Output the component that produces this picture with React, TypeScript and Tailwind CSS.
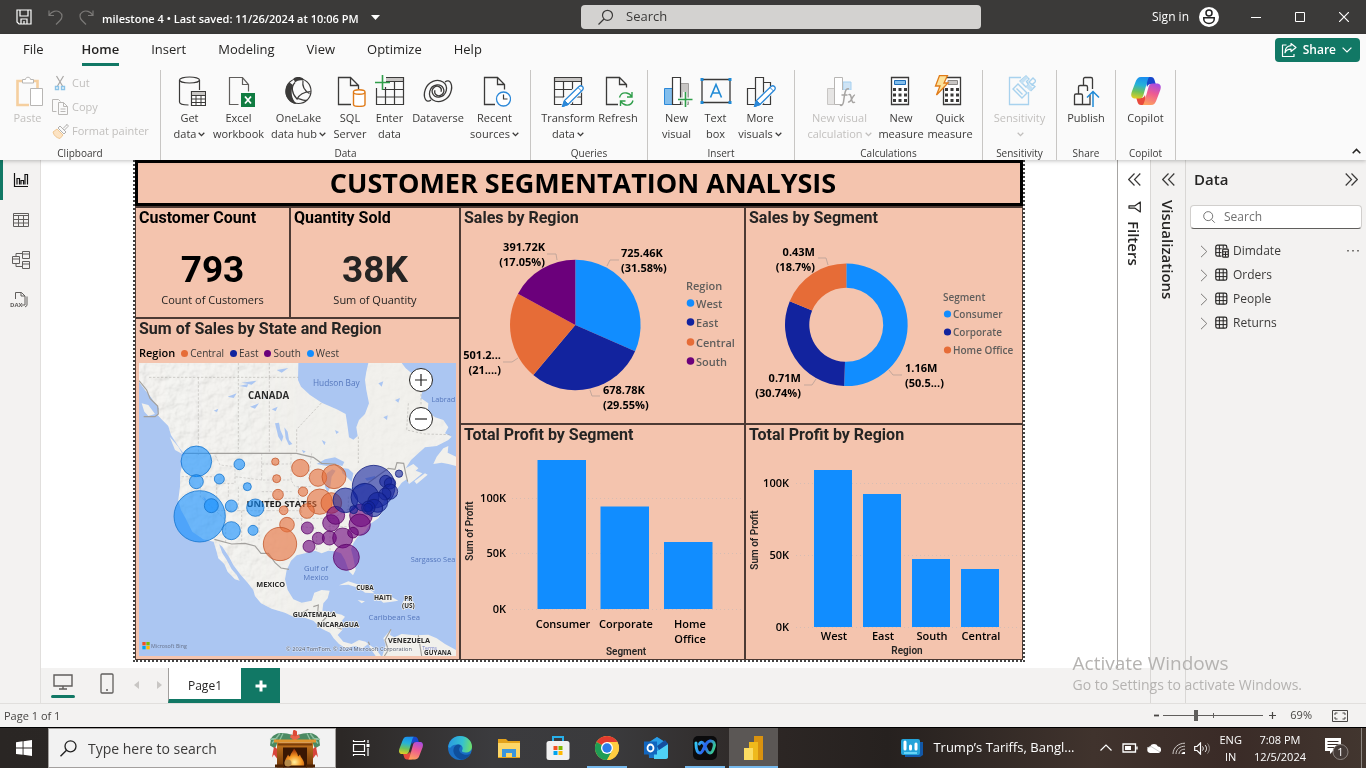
import React from "react";

type P = { children?: React.ReactNode };

/* ---------- shared bits ---------- */

function Icon({ children, size = 32 }: P & { size?: number }) {
  return (
    <svg width={size} height={size} viewBox={`0 0 ${size} ${size}`} fill="none" className="shrink-0" aria-hidden="true">
      {children}
    </svg>
  );
}

function Caret({ className = "" }: { className?: string }) {
  return (
    <svg width="7" height="5" viewBox="0 0 7 5" fill="none" className={`inline-block ${className}`} aria-hidden="true">
      <path d="M.7.8 3.5 3.6 6.3.8" stroke="currentColor" strokeWidth="1.3" />
    </svg>
  );
}

function CopilotLogo({ id, size }: { id: string; size: number }) {
  return (
    <svg width={size} height={size} viewBox="0 0 32 32" aria-hidden="true">
      <defs>
        <linearGradient id={`${id}a`} x1="12" y1="2" x2="8" y2="25" gradientUnits="userSpaceOnUse">
          <stop offset="0" stopColor="#1a8ef0" />
          <stop offset=".35" stopColor="#25b2d8" />
          <stop offset=".65" stopColor="#6fc25a" />
          <stop offset="1" stopColor="#f6cf1b" />
        </linearGradient>
        <linearGradient id={`${id}b`} x1="26" y1="8" x2="18" y2="31" gradientUnits="userSpaceOnUse">
          <stop offset="0" stopColor="#a24be8" />
          <stop offset=".45" stopColor="#ee5a92" />
          <stop offset="1" stopColor="#ffa55a" />
        </linearGradient>
        <linearGradient id={`${id}c`} x1="16" y1="3" x2="25" y2="9" gradientUnits="userSpaceOnUse">
          <stop offset="0" stopColor="#1450c8" />
          <stop offset="1" stopColor="#1b3fd0" />
        </linearGradient>
      </defs>
      <path d="M15 2h6c2 0 2.900 1.200 3.500 3l1.200 4H21c-2 0-3.300 1-4 3z" fill={`url(#${id}c)`} />
      <path d="M17 30h-6c-2 0-2.900-1.200-3.500-3l-1.200-4H11c2 0 3.300-1 4-3z" fill="#e84a3c" />
      <path d="M19.500 2H11C8 2 6.500 4 5.500 7L1.700 17c-1.300 4 0 6.500 3.600 6.500H9.500c2 0 3.200-1 3.800-3L17 7.500C17.800 4.500 18.500 2.400 19.500 2z" fill={`url(#${id}a)`} />
      <path d="M12.500 30H21c3 0 4.500-2 5.500-5l3.800-10c1.300-4 0-6.500-3.600-6.500H22.500c-2 0-3.200 1-3.800 3L15 24.500c-.8 3-1.500 5.100-2.500 5.500z" fill={`url(#${id}b)`} />
    </svg>
  );
}

/* ---------- title bar ---------- */

function TitleBar() {
  return (
    <header className="grid h-[34px] shrink-0 grid-cols-[581fr_400px_385fr] items-center bg-[#3b3a39] text-white">
      <div className="flex items-center pl-4">
        <button aria-label="Save" className="mr-4">
          <Icon size={16}>
            <path d="M1 1h14v14H3l-2-2zM4 1v6h8V1M5 15v-5h6v5M8 12v3" stroke="#fff" strokeWidth="1.200" />
          </Icon>
        </button>
        <button aria-label="Undo" className="mr-[14px]">
          <Icon size={16}>
            <path d="M1 1.500v5h5M1.300 6.200C3.500 2.500 8 .8 11.500 3s3 6 .5 8.500L8 15.500" stroke="#7b7977" strokeWidth="1.200" />
          </Icon>
        </button>
        <button aria-label="Redo" className="mr-2">
          <Icon size={16}>
            <path d="M15 1.500v5h-5M14.700 6.200C12.500 2.500 8 .8 4.500 3s-3 6-.5 8.500L8 15.500" stroke="#7b7977" strokeWidth="1.200" />
          </Icon>
        </button>
        <button className="flex items-center gap-3 pt-1 text-[11px] font-semibold whitespace-nowrap">
          <span>milestone 4 • Last saved: 11/26/2024 at 10:06 PM</span>
          <svg width="9" height="5" viewBox="0 0 9 5" className="mb-1" aria-hidden="true">
            <path d="M0 0h9L4.500 5z" fill="#fff" />
          </svg>
        </button>
      </div>
      <label className="flex h-6 items-center gap-3 rounded-sm bg-[#d3d2d0] pl-4 text-[#3b3a39]">
        <svg width="17" height="17" viewBox="0 0 17 17" fill="none" aria-hidden="true">
          <circle cx="10.500" cy="6.300" r="5" stroke="#3b3a39" strokeWidth="1.200" />
          <path d="m7 10-5.500 5.500" stroke="#3b3a39" strokeWidth="1.300" />
        </svg>
        <input aria-label="Search commands" placeholder="Search" className="min-w-0 flex-1 bg-transparent text-[13px] outline-none placeholder:text-[#3b3a39]" />
      </label>
      <div className="flex items-center justify-end">
        <button className="mr-[15px] flex items-center gap-2.5 text-[12px]">
          Sign in
          <svg width="20" height="20" viewBox="0 0 20 20" aria-hidden="true">
            <circle cx="10" cy="10" r="10" fill="#fff" />
            <circle cx="10" cy="6" r="3" fill="none" stroke="#222" strokeWidth="1.500" />
            <path d="M4.800 10.800h10.400v1.400c0 2.500-2.300 4.200-5.200 4.200s-5.200-1.700-5.200-4.200z" fill="none" stroke="#222" strokeWidth="1.500" />
          </svg>
        </button>
        <button aria-label="Minimize" className="flex w-11 justify-center">
          <Icon size={10}><path d="M0 5.500h10" stroke="#fff" /></Icon>
        </button>
        <button aria-label="Maximize" className="flex w-11 justify-center">
          <Icon size={10}><path d="M.5.5h9v9h-9z" stroke="#fff" /></Icon>
        </button>
        <button aria-label="Close" className="flex w-11 justify-center">
          <Icon size={10}><path d="m0 0 10 10M10 0 0 10" stroke="#fff" strokeWidth="1.200" /></Icon>
        </button>
      </div>
    </header>
  );
}

/* ---------- ribbon ---------- */

const tabs = ["File", "Home", "Insert", "Modeling", "View", "Optimize", "Help"];

function TabRow() {
  return (
    <nav className="flex h-8 items-center justify-between pr-1.5 pl-[7px] text-[13px] text-[#252423]">
      <div className="flex">
        {tabs.map((t) => (
          <button key={t} className={`px-4 ${t === "File" ? "mr-1.5" : ""} ${t === "Home" ? "font-semibold" : ""}`}>
            <span className={`block border-b-[3px] pt-1 pb-1 leading-5 ${t === "Home" ? "border-[#117865]" : "border-transparent"}`}>{t}</span>
          </button>
        ))}
      </div>
      <button className="flex h-6 items-center gap-1.5 rounded bg-[#117865] pr-2 pl-1.5 text-[12px] font-semibold text-white">
        <Icon size={16}>
          <path d="M5.500 3H1.500v11.500h11.500V12M10 1.500l5 4-5 4V7.200c-3 0-5 1-6 3.500 0-4 2-6.700 6-7z" stroke="#fff" strokeWidth="1.200" strokeLinejoin="round" />
        </Icon>
        Share
        <svg width="10" height="6" viewBox="0 0 10 6" fill="none" aria-hidden="true"><path d="m.6.600 4.400 4.400L9.400.600" stroke="#fff" strokeWidth="1.200" /></svg>
      </button>
    </nav>
  );
}

const K = "#3b3a39";

const icGetData = (
  <Icon>
    <path d="M5.500 5v22c0 1.800 4 3 9 3M25.500 5v10" stroke={K} strokeWidth="1.200" />
    <ellipse cx="15.500" cy="5" rx="10" ry="3" stroke={K} strokeWidth="1.200" />
    <path d="M17.500 16.500h14v14h-14z" fill="#fff" stroke={K} strokeWidth="1.200" />
    <path d="M18 17h13v3H18z" fill="#c8c6c4" />
    <path d="M17.500 20.500h14M17.500 24h14M17.500 27.500h14M22 20.500v10M27 20.500v10" stroke={K} />
  </Icon>
);
const icExcel = (
  <Icon>
    <path d="M15.500 29.500h-9v-27h13l6 7v7M19.500 2.500v7h6" stroke="#605e5c" strokeWidth="1.200" />
    <path d="M18 18h14v14H18z" fill="#107c41" />
    <path d="m22 21.500 6 7M28 21.500l-6 7" stroke="#fff" strokeWidth="1.800" />
  </Icon>
);
const icOneLake = (
  <Icon>
    <circle cx="15.500" cy="16" r="12.500" stroke={K} strokeWidth="1.200" />
    <path d="M10.500 3.500C13.500 1.500 18 1.500 20.500 4l-.5 1.500c-3-.8-5.500 0-8 2zM6.500 7.500C1 13 1 21 7 26.500 10 29 13.500 29 13.500 28.500 8.500 24 7.500 17 10 10z" fill={K} />
    <path d="M12 7.500c-4 4-3.500 11 2 16.500 2.500-5 7-7 13.500-7.500M20 5.500c-1 6 1 10 6.500 13M14 24c2-2 6 3 10 1" stroke={K} strokeWidth="1.200" />
  </Icon>
);
const icSql = (
  <Icon>
    <path d="M17 29.500H4.500v-27h12l8 8M16.500 2.500v8h8v4" stroke={K} strokeWidth="1.300" />
    <path d="M19.500 17.500v12c0 2.500 11.500 2.500 11.500 0v-12" fill="#fff" stroke="#e07b18" strokeWidth="1.400" />
    <ellipse cx="25.200" cy="17" rx="5.800" ry="2.200" fill="#fff" stroke="#e07b18" strokeWidth="1.400" />
  </Icon>
);
const icEnter = (
  <Icon>
    <path d="M12 2h17v4H12z" fill="#c8c6c4" />
    <path d="M12 2.500h17.500v27h-27V13M12 6.500h17.500M8 14.500h21.500M2.500 22h27M11.500 12v17.500M20.500 6.500v23" stroke={K} strokeWidth="1.200" />
    <path d="M8.500 0v15M1 7.500h15" stroke="#2f9e4a" strokeWidth="1.600" />
  </Icon>
);
const icDataverse = (
  <Icon>
    <path d="M9 25C4 29 .5 22 3.500 14 6 7 15 3 21 7c6 4 4 14-4 15-6 .6-9-6-5-9.500 3.500-3 8.500 0 7 4.200" stroke={K} strokeWidth="1.300" />
    <path d="M23 7c5-4 8.500 3 5.500 11C26 25 17 29 11 25c-6-4-4-14 4-15 6-.6 9 6 5 9.500-3.500 3-8.500 0-7-4.200" stroke={K} strokeWidth="1.300" />
  </Icon>
);
const icRecent = (
  <Icon>
    <path d="M16 29.500H5.500v-27h13l7 7v5M18.500 2.500v7h7" stroke={K} strokeWidth="1.300" />
    <circle cx="24.500" cy="24" r="7" fill="#fff" stroke="#2b88d8" strokeWidth="1.300" />
    <path d="M24.500 19.500V24h4" stroke={K} strokeWidth="1.200" />
  </Icon>
);
const pencil = (
  <g>
    <path d="m10.500 31.500 2-6L27 11.500c2.500-2 5.500 1 3.500 3.500L16 29.500z" fill="#fff" stroke="#2b88d8" strokeWidth="1.300" />
    <path d="m10.500 31.500 2-6 4 4zM26 12.500l3.500 3.500" fill="#2b88d8" stroke="#2b88d8" />
  </g>
);
const icTransform = (
  <Icon>
    <path d="M2 2h27v4H2z" fill="#c8c6c4" />
    <path d="M2.500 2.500h27v27h-27zM2.500 6.500h27M2.500 14.500h27M2.500 22h27M11.500 6.500v23M20.500 6.500v23" stroke={K} strokeWidth="1.200" />
    <path d="m12 24 14-13 4 4-14 15h-5z" fill="#fafafa" stroke="#fafafa" strokeWidth="3" />
    {pencil}
  </Icon>
);
const icRefresh = (
  <Icon>
    <path d="M16 29.500H4.500v-27h13l7 7v3M17.500 2.500v7h7" stroke={K} strokeWidth="1.300" />
    <path d="M17.500 22.500c1-3.500 4-5 7-4.500 2 .3 4 1.500 5 3.500M31 25.500c-1 3.500-4 5-7 4.500-2-.3-4-1.500-5-3.500M30 17v5h-5M18.500 31v-5h5" stroke="#2f9e4a" strokeWidth="1.400" />
  </Icon>
);
const icNewVisual = (
  <Icon>
    <path d="M3.500 13.500h8v16h-8z" fill="#83beec" stroke="#2b88d8" />
    <path d="M19.500 8.500h8v21h-8z" fill="#c8c6c4" stroke="#a19f9d" />
    <path d="M11.500 2.500h8v27h-8z" fill="#fff" stroke={K} strokeWidth="1.200" />
    <path d="M17 24.500h14M24 17v15" stroke="#fafafa" strokeWidth="4" />
    <path d="M17 24.500h14.500M24.500 17v15" stroke="#2f9e4a" strokeWidth="1.600" />
  </Icon>
);
const icTextBox = (
  <Icon>
    <path d="M2 4.500h28v23H2z" stroke={K} strokeWidth="1.300" />
    <path d="M.5 3h3v3h-3zM28.500 3h3v3h-3zM.5 26h3v3h-3zM28.500 26h3v3h-3z" fill="#1f8ad6" />
    <path d="m10.500 22.500 5.500-13 5.500 13M12.500 18h7" stroke="#1f8ad6" strokeWidth="1.600" />
  </Icon>
);
const icMoreVisuals = (
  <Icon>
    <path d="M3.500 13.500h8v16h-8zM11.500 2.500h8v27h-8zM19.500 7.500h7v22h-7z" stroke={K} strokeWidth="1.200" />
    <path d="m14 24 13-11 3 2-14 15h-4z" fill="#fafafa" stroke="#fafafa" strokeWidth="3" />
    {pencil}
  </Icon>
);
const icVisualCalc = (
  <Icon>
    <path d="M3.500 13.500h7v16h-7z" fill="#e6e5e4" stroke="#c8c6c4" />
    <path d="M19 7h8v8h-8z" fill="#cfe4f5" stroke="#a5d0f0" />
    <path d="M10.500 2.500h8v27h-8z" fill="#fff" stroke="#b8b6b4" />
    <path d="M17 15h15v17H18z" fill="#fafafa" />
    <path d="M25 14c-3-1-3.800 2-4.500 6l-1 7c-.5 3-2 4-3.500 3M17.500 20h6M24.500 20c2-1.500 2.500 1 3 4s1.500 4.500 3.500 3M31 20c-2.500-.5-3.500 8-7 7" stroke="#a6a4a2" strokeWidth="1.500" />
  </Icon>
);
const calcGrid = "M9 13h3v3H9zM14.500 13h3v3h-3zM20 13h3v3h-3zM9 18.500h3v3H9zM14.500 18.500h3v3h-3zM20 18.500h3v3h-3zM9 24h3v3H9zM14.500 24h3v3h-3zM20 24h3v3h-3z";
const icMeasure = (
  <Icon>
    <path d="M6.500 2.500h17v27h-17z" fill="#fff" stroke={K} strokeWidth="1.300" />
    <path d="M9.500 5.500h11v4h-11z" fill="#83beec" stroke="#1f6fb8" />
    <path d={calcGrid} fill={K} transform="translate(-1)" />
  </Icon>
);
const icQuick = (
  <Icon>
    <path d="M9.500 2.500h17v27h-17z" fill="#fff" stroke={K} strokeWidth="1.300" />
    <path d="M14 5.500h9.500v4H14z" fill="#c8c6c4" stroke="#8a8886" />
    <path d={calcGrid} fill={K} transform="translate(2)" />
    <path d="M5.500.5h8L10 8h4L2.500 20 6 11H1.500z" fill="#fce29b" stroke="#e07b18" strokeWidth="1.300" />
  </Icon>
);
const icSensitivity = (
  <Icon>
    <path d="M17 2.500H5.500v27h19V17" stroke="#a8d2ee" strokeWidth="1.300" />
    <path d="m9 14 5-5 9 9-5 5zM12.500 13.500l6 6M16 6l6 6 2.500-2.500-2-3L25 4l-3-3zM23 12l4 3.500 4-4-4-3M25 7l4-4 3 3-4 4z" stroke="#a8d2ee" strokeWidth="1.400" />
    <path d="m16 6 6-5 2 2-6 6zM22 12l3-3 4 4-3 3z" fill="#c5e1f4" />
  </Icon>
);
const icPublish = (
  <Icon>
    <path d="M15 29.500H4.500v-9c0-1 .7-1.500 1.500-1.500h5c1 0 1.500.600 1.500 1.500v9M8.500 19v-7c0-1 .6-1.500 1.500-1.500h6c1 0 1.500.600 1.500 1.500v4M13.500 10.500V4c0-1 .6-1.500 1.500-1.500h6c1 0 1.500.600 1.500 1.500v10M12.500 29.500H20V20" stroke={K} strokeWidth="1.300" />
    <path d="M23 32V17M17 22.500l6-6 6 6" stroke="#1f8ad6" strokeWidth="1.500" />
  </Icon>
);

type RB = { icon: React.ReactNode; a: string; b?: string; caret?: boolean; w: string; off?: boolean };

function RibbonButton({ icon, a, b, caret, w, off }: RB) {
  return (
    <button className={`flex flex-col items-center gap-[3px] text-[11px] leading-4 whitespace-nowrap ${w} ${off ? "text-[#c1bfbd]" : "text-[#3b3a39]"}`}>
      {icon}
      <span className="flex flex-col items-center">
        <span>{a}</span>
        <span>
          {b}
          {caret && <Caret className="mb-px ml-0.5" />}
        </span>
      </span>
    </button>
  );
}

function Group({ label, w, children }: P & { label: string; w: string }) {
  return (
    <section className={`flex shrink-0 flex-col border-r border-[#c8c6c4] pt-[5px] ${w}`}>
      <div className="flex h-[71px] justify-center">{children}</div>
      <h2 className="text-center text-[10px] leading-[14px] text-[#3b3a39]">{label}</h2>
    </section>
  );
}

function SmallCmd({ icon, label }: { icon: React.ReactNode; label: string }) {
  return (
    <button className="flex h-6 items-center gap-[3px] text-[11px] whitespace-nowrap text-[#c1bfbd]">
      {icon}
      {label}
    </button>
  );
}

function Ribbon() {
  return (
    <div className="z-10 shrink-0 bg-[#fafafa] shadow-[0_1px_4px_rgba(0,0,0,0.25)]">
      <TabRow />
      <div className="flex items-end justify-between pt-1">
        <div className="flex">
          <Group label="Clipboard" w="w-[161px]">
            <div className="flex w-full">
              <button className="flex w-[55px] flex-col items-center gap-[3px] text-[11px] leading-4 text-[#c1bfbd]">
                <Icon>
                  <path d="M10 6H5.500v24H17M21 6h4.500v7" stroke="#f5cf9f" strokeWidth="2.600" />
                  <path d="M10.500 8V4.500h3c0-3 5-3 5 0h3V8z" fill="#fff" stroke="#b8b6b4" />
                  <path d="M18.500 13.500h12v17h-12z" fill="#fff" stroke="#b8b6b4" />
                </Icon>
                Paste
              </button>
              <div className="-mt-1 -ml-1 flex flex-col">
                <SmallCmd
                  label="Cut"
                  icon={
                    <Icon size={18}>
                      <path d="m5.500 2 6 10M12.500 2l-6 10" stroke="#a9a7a5" strokeWidth="1.200" />
                      <path d="M4.500 12.500h3v3h-3zM10.500 12.500h3v3h-3z" stroke="#8cc4e8" strokeWidth="1.400" />
                    </Icon>
                  }
                />
                <SmallCmd
                  label="Copy"
                  icon={
                    <Icon size={18}>
                      <path d="M5.500 13.500h-4v-12h6l2 2M7.500 4.500h5l4 4v8h-9zM12.500 4.500v4h4M9.500 11h5M9.500 13.500h5" stroke="#bab8b6" />
                    </Icon>
                  }
                />
                <SmallCmd
                  label="Format painter"
                  icon={
                    <Icon size={18}>
                      <path d="m2 10 4-3 6 6-3 3.500C6 16 3 14 2 10z" fill="#fce3c3" stroke="#f0c793" />
                      <path d="m7 6 2-2 6 6-2 2zM12 6.500 15.500 3M13.500 8 17 4.500c.5-1.500-1-2.500-2-1.500" stroke="#b1afad" />
                    </Icon>
                  }
                />
              </div>
            </div>
          </Group>
          <Group label="Data" w="w-[370px]">
            <RibbonButton icon={icGetData} a="Get" b="data" caret w="w-11" />
            <RibbonButton icon={icExcel} a="Excel" b="workbook" w="w-[54px]" />
            <RibbonButton icon={icOneLake} a="OneLake" b="data hub" caret w="w-[66px]" />
            <RibbonButton icon={icSql} a="SQL" b="Server" w="w-[37px]" />
            <RibbonButton icon={icEnter} a="Enter" b="data" w="w-[42px]" />
            <RibbonButton icon={icDataverse} a="Dataverse" w="w-[55px]" />
            <RibbonButton icon={icRecent} a="Recent" b="sources" caret w="w-[58px]" />
          </Group>
          <Group label="Queries" w="w-[117px]">
            <RibbonButton icon={icTransform} a="Transform" b="data" caret w="w-[58px]" />
            <RibbonButton icon={icRefresh} a="Refresh" w="w-[42px]" />
          </Group>
          <Group label="Insert" w="w-[147px]">
            <RibbonButton icon={icNewVisual} a="New" b="visual" w="w-[37px]" />
            <RibbonButton icon={icTextBox} a="Text" b="box" w="w-[41px]" />
            <RibbonButton icon={icMoreVisuals} a="More" b="visuals" caret w="w-12" />
          </Group>
          <Group label="Calculations" w="w-[188px]">
            <RibbonButton icon={icVisualCalc} a="New visual" b="calculation" caret off w="w-[74px]" />
            <RibbonButton icon={icMeasure} a="New" b="measure" w="w-[49px]" />
            <RibbonButton icon={icQuick} a="Quick" b="measure" w="w-[49px]" />
          </Group>
          <Group label="Sensitivity" w="w-[74px]">
            <RibbonButton icon={icSensitivity} a="Sensitivity" caret off w="w-full" />
          </Group>
          <Group label="Share" w="w-[59px]">
            <RibbonButton icon={icPublish} a="Publish" w="w-full" />
          </Group>
          <Group label="Copilot" w="w-[60px]">
            <RibbonButton icon={<CopilotLogo id="rc" size={32} />} a="Copilot" w="w-full" />
          </Group>
        </div>
        <button aria-label="Collapse the ribbon" className="mr-[5px] mb-1.5">
          <svg width="9" height="6" viewBox="0 0 9 6" fill="none" aria-hidden="true"><path d="M.7 5.200 4.500 1.400l3.800 3.800" stroke="#252423" strokeWidth="1.500" /></svg>
        </button>
      </div>
    </div>
  );
}

/* ---------- left navigation ---------- */

function SideNav() {
  return (
    <nav className="flex w-[41px] shrink-0 flex-col border-r border-[#e1dfdd] bg-[#f3f2f1]">
      <button aria-label="Report view" className="flex h-10 items-center border-l-[3px] border-[#117865] pl-2.5">
        <Icon size={16}>
          <path d="M1.500 1v13.500H15M4 12.500v-6h2.500v6M8 12.500v-4h2.500v4M12 12.500V2.500h2.500v10" stroke="#111" strokeWidth="1.200" />
        </Icon>
      </button>
      <button aria-label="Table view" className="flex h-10 items-center pl-3">
        <Icon size={18}>
          <path d="M1.500 2.500h15v13h-15zM1.500 4.500h15M1.500 8.500h15M1.500 12h15M6.500 4.500v11M11.500 4.500v11" stroke="#605e5c" />
        </Icon>
      </button>
      <button aria-label="Model view" className="flex h-10 items-center pl-3">
        <Icon size={18}>
          <path d="M.5 5.500h7v7h-7zM.5 8h7M10.500.5h7v7h-7zM10.500 3h7M10.500 10.500h7v7h-7zM10.500 13h7M4 5.500v-3h6.500M4 12.500v3h6.500" stroke="#605e5c" />
        </Icon>
      </button>
      <button aria-label="DAX query view" className="flex h-10 items-center pl-2.5">
        <Icon size={20}>
          <path d="M5.500 9V2.500h6l3.500 3.500v9h-3M11 2.500V6h4M17 6.500v9l-2 1.500" stroke="#605e5c" />
          <text x="0" y="17" fontSize="6" fontWeight="700" fill="#605e5c">DAX</text>
        </Icon>
      </button>
    </nav>
  );
}

/* ---------- report ---------- */

const C = { west: "#118DFF", east: "#12239E", central: "#E66C37", south: "#6B007B" };

function Panel({ title, dark, className = "", children }: P & { title: string; dark?: boolean; className?: string }) {
  return (
    <section className={`flex min-w-0 flex-col bg-[#f4c4ae] ${className}`}>
      <h3 className={`h-[22px] pl-[3px] font-[Roboto,sans-serif] text-[16px] leading-5 font-bold whitespace-nowrap ${dark ? "text-black" : "text-[#252423]"}`}>{title}</h3>
      {children}
    </section>
  );
}

function Card({ title, value, label, dark }: { title: string; value: string; label: string; dark?: boolean }) {
  return (
    <Panel title={title} dark>
      <div className={`flex flex-1 flex-col items-center pt-5 font-[Roboto,sans-serif] text-[37px] leading-10 font-bold ${dark ? "text-black" : "text-[#252423]"}`}>
        {value}
        <span className="font-['Open_Sans','Noto_Sans',sans-serif] text-[11px] leading-[20px] font-normal text-[#252423]">{label}</span>
      </div>
    </Panel>
  );
}

function arc(cx: number, cy: number, R: number, r: number, a0: number, a1: number) {
  const p = (rad: number, a: number) => {
    const t = a * 2 * Math.PI;
    return `${(cx + rad * Math.sin(t)).toFixed(2)} ${(cy - rad * Math.cos(t)).toFixed(2)}`;
  };
  const big = a1 - a0 > 0.5 ? 1 : 0;
  if (r === 0) return `M${cx} ${cy}L${p(R, a0)}A${R} ${R} 0 ${big} 1 ${p(R, a1)}Z`;
  return `M${p(R, a0)}A${R} ${R} 0 ${big} 1 ${p(R, a1)}L${p(r, a1)}A${r} ${r} 0 ${big} 0 ${p(r, a0)}Z`;
}

type Label = { x: number; y: number; end?: boolean; a: string; b: string; line: string };

function Callouts({ items }: { items: Label[] }) {
  return (
    <>
      {items.map((l) => (
        <g key={l.a}>
          <polyline points={l.line} fill="none" stroke="#c3a79b" />
          <text x={l.x} y={l.y} textAnchor={l.end ? "end" : "start"} fontSize="11" fontWeight="700">
            {l.a}
            <tspan x={l.x} dy="15">{l.b}</tspan>
          </text>
        </g>
      ))}
    </>
  );
}

function PieChart() {
  return (
    <svg viewBox="0 0 283 193" className="w-full" role="img" aria-label="Sales by Region">
      <path d={arc(114.300, 95, 65.300, 0, 0, 0.3158)} fill={C.west} />
      <path d={arc(114.300, 95, 65.300, 0, 0.3158, 0.6113)} fill={C.east} />
      <path d={arc(114.300, 95, 65.300, 0, 0.6113, 0.8295)} fill={C.central} />
      <path d={arc(114.300, 95, 65.300, 0, 0.8295, 1)} fill={C.south} />
      <Callouts
        items={[
          { x: 160, y: 27, a: "725.46K", b: "(31.58%)", line: "158,30 149,30 146,36" },
          { x: 84, y: 21, end: true, a: "391.72K", b: "(17.05%)", line: "86,24 95,24 96,30" },
          { x: 40, y: 129, end: true, a: "501.2...", b: "(21....)", line: "42,132 51,132 57,128" },
          { x: 142, y: 164, a: "678.78K", b: "(29.55%)", line: "129,160 131,166 139,166" },
        ]}
      />
      <g fontSize="11" fontWeight="600" fill="#605e5c">
        <text x="225" y="60">Region</text>
        {[["West", C.west, 73], ["East", C.east, 92], ["Central", C.central, 112], ["South", C.south, 131]].map(([n, c, y]) => (
          <g key={n}>
            <circle cx="229.500" cy={y} r="3.800" fill={c as string} />
            <text x="235" y={(y as number) + 5}>{n}</text>
          </g>
        ))}
      </g>
    </svg>
  );
}

function DonutChart() {
  return (
    <svg viewBox="0 0 276 193" className="w-full" role="img" aria-label="Sales by Segment">
      <path d={arc(100.300, 94.800, 61.300, 37, 0, 0.5056)} fill={C.west} />
      <path d={arc(100.300, 94.800, 61.300, 37, 0.5056, 0.813)} fill={C.east} />
      <path d={arc(100.300, 94.800, 61.300, 37, 0.813, 1)} fill={C.central} />
      <Callouts
        items={[
          { x: 69, y: 26, end: true, a: "0.43M", b: "(18.7%)", line: "72,28 80,28 82,35" },
          { x: 159, y: 142, a: "1.16M", b: "(50.5...)", line: "143,140 147,145 156,145" },
          { x: 55, y: 152, end: true, a: "0.71M", b: "(30.74%)", line: "58,155 66,155 70,149" },
        ]}
      />
      <g fontSize="10" fontWeight="600" fill="#605e5c">
        <text x="197" y="71">Segment</text>
        {[["Consumer", C.west, 84], ["Corporate", C.east, 102], ["Home Office", C.central, 120]].map(([n, c, y]) => (
          <g key={n}>
            <circle cx="201.500" cy={y} r="3.600" fill={c as string} />
            <text x="207" y={(y as number) + 4}>{n}</text>
          </g>
        ))}
      </g>
    </svg>
  );
}

type Bar = { x: number; y: number; label: string[]; cx: number };

function BarChart({ vw, bars, bw, base, ticks, tickX, from, to, labelY, axis, axisX, axisY, yTitleX, yTitleY, name }: {
  vw: number; bars: Bar[]; bw: number; base: number; ticks: [string, number][]; tickX: number; from: number; to: number;
  labelY: number; axis: string; axisX: number; axisY: number; yTitleX: number; yTitleY: number; name: string;
}) {
  return (
    <svg viewBox={`0 0 ${vw} 212`} className="w-full" role="img" aria-label={name}>
      {ticks.map(([t, y]) => (
        <g key={t}>
          <path d={`M${from} ${y + 0.5}H${to}`} stroke="#d6bdb3" strokeDasharray="1 3" />
          <text x={tickX} y={y + 4} textAnchor="end" fontSize="11" fontWeight="600">{t}</text>
        </g>
      ))}
      {bars.map((b) => (
        <g key={b.x}>
          <rect x={b.x} y={b.y} width={bw} height={base - b.y} fill={C.west} />
          <text x={b.cx} y={labelY} textAnchor="middle" fontSize="11" fontWeight="600">
            {b.label.map((t, i) => (
              <tspan key={t} x={b.cx} dy={i * 15}>{t}</tspan>
            ))}
          </text>
        </g>
      ))}
      <g fontFamily="Roboto, sans-serif" fontSize="10" fontWeight="600" fill="#252423" textAnchor="middle">
        <text x={axisX} y={axisY}>{axis}</text>
        <text transform={`translate(${yTitleX} ${yTitleY}) rotate(-90)`}>Sum of Profit</text>
      </g>
    </svg>
  );
}

const bubbles: { c: string; s: string; d: number[][] }[] = [
  { c: C.west, s: "#0d6fc9", d: [[184, 364, 46], [184, 425, 21], [253, 417, 15], [313, 373, 16], [337, 440, 12], [194, 529, 77], [229, 497, 21], [289, 498, 18], [361, 503, 26], [289, 572, 27], [354, 571, 15]] },
  { c: C.central, s: "#c2562a", d: [[421, 365, 11], [496, 384, 26], [425, 416, 12], [429, 464, 16], [504, 455, 14], [549, 413, 26], [597, 410, 36], [554, 485, 38], [589, 489, 31], [446, 511, 13], [516, 513, 22], [456, 554, 22], [435, 612, 50]] },
  { c: C.south, s: "#560063", d: [[517, 564, 18], [522, 619, 18], [550, 595, 18], [583, 594, 21], [623, 594, 30], [588, 549, 25], [602, 526, 27], [678, 526, 34], [674, 554, 32], [654, 578, 16], [634, 652, 39]] },
  { c: C.east, s: "#0e1b7c", d: [[716, 440, 64], [631, 481, 37], [690, 472, 42], [752, 424, 18], [765, 430, 17], [765, 455, 23], [750, 462, 18], [728, 487, 30], [717, 504, 26], [700, 503, 20], [699, 503, 13], [656, 509, 12], [792, 401, 11]] },
];

const land =
  "M12 69H490L489 120 498 140 525 165 560 188 605 208 632 222 638 262 642 292 655 299 668 288 664 262 672 240 690 222 702 190 694 150 690 120 694 95 700 69H800L812 85 830 100 850 110 845 130 862 150 858 175 880 190 878 215 900 232 925 240 940 262 930 280 950 290 940 300 905 318 870 322 850 340 828 360 812 385 835 372 850 385 842 392 862 400 838 420 822 432 815 418 800 428 788 445 790 462 765 472 750 478 738 500 742 515 730 535 705 552 690 575 668 590 655 610 648 628 655 655 662 690 654 706 642 694 630 660 618 640 600 634 580 632 560 640 540 632 510 640 485 646 468 662 455 690 450 718 458 750 475 778 500 788 530 782 538 758 560 750 584 752 578 775 565 790 562 812 585 816 620 824 630 830 618 845 622 870 608 885 625 905 650 912 672 900 692 905 700 912 682 925 660 918 632 925 612 912 596 895 585 878 560 866 535 842 505 832 478 832 450 818 410 806 378 790 360 768 355 750 338 728 315 702 295 675 282 650 262 620 252 612 262 640 275 660 290 688 305 705 314 722 300 718 278 695 268 672 250 655 245 635 236 605 205 598 172 575 152 535 138 510 130 480 135 440 136 400 142 372 138 350 150 345 132 322 108 285 100 258 82 240 68 225 72 205 60 190 48 172 30 150 12 125Z";

function MapView() {
  return (
    <div className="relative mx-[3px]">
      <svg viewBox="12 69 951 879" className="w-full" role="img" aria-label="Map of sales by state">
        <defs>
          <filter id="relief" x="0" y="0" width="100%" height="100%">
            <feTurbulence type="fractalNoise" baseFrequency="0.035" numOctaves="3" seed="7" result="n" />
            <feDiffuseLighting in="n" surfaceScale="7" lightingColor="#ffffff">
              <feDistantLight azimuth="225" elevation="62" />
            </feDiffuseLighting>
          </filter>
          <clipPath id="landclip"><path d={land} /></clipPath>
          <linearGradient id="fadew" x1="0" x2="1" y1="0" y2="0">
            <stop offset="0" stopColor="#fff" />
            <stop offset=".35" stopColor="#fff" stopOpacity=".7" />
            <stop offset=".5" stopColor="#fff" stopOpacity=".15" />
            <stop offset="1" stopColor="#fff" stopOpacity=".3" />
          </linearGradient>
          <mask id="mw"><rect x="12" y="69" width="951" height="879" fill="url(#fadew)" /></mask>
        </defs>
        <rect x="12" y="69" width="951" height="879" fill="#abc6f2" />
        <path d={land} fill="#f1f0ec" />
        <path d="M742 948 752 915 745 895 768 868 765 885 778 892 800 882 840 886 880 884 905 895 930 912 963 930V948ZM700 912 725 930 738 948H722L708 928Z" fill="#f1f0ec" />
        <path d="M612 736 640 724 672 734 705 748 718 760 690 758 672 744 640 734ZM726 772 740 762 765 768 790 782 765 786 745 788ZM668 780 690 784 680 790ZM804 782 824 783 822 790 804 789ZM895 372 905 350 925 325 940 318 938 338 963 350V378L940 372 920 368ZM838 424 870 400 878 404 845 432ZM20 190 40 195 60 222 40 228 28 215ZM104 290 130 320 142 342 120 330Z" fill="#f1f0ec" />
        <g clipPath="url(#landclip)">
          <rect x="12" y="69" width="951" height="879" filter="url(#relief)" opacity=".36" mask="url(#mw)" style={{ mixBlendMode: "multiply" }} />
        </g>
        <g fill="#abc6f2">
          <path d="M420 250 432 248 436 270 445 290 440 305 430 290ZM448 262 458 275 462 300 472 312 462 316 452 295ZM312 138 340 132 336 142ZM320 128 365 122 350 134ZM278 170 305 160 296 174ZM345 200 372 190 360 206ZM382 172 400 165 395 178ZM425 90 460 84 440 98ZM236 212 250 206 246 216ZM410 208 428 200 422 214ZM560 300 572 306 568 316ZM500 330 512 334 506 340ZM745 232 758 226 756 240ZM780 180 795 174 790 188ZM730 130 745 124 740 140ZM600 270 612 276 604 282Z" />
          <path d="M545 372 570 358 600 352 628 366 622 378 600 372 575 378ZM575 400 592 388 602 392 590 410 586 440 578 458 570 440ZM618 384 640 386 655 400 650 425 636 412 622 400ZM640 448 668 436 690 428 692 434 662 448ZM690 415 720 408 722 416 696 422ZM205 470 214 478 210 488Z" />
        </g>
        <g fill="none" stroke="#a7a5a1" strokeWidth="1.500" strokeDasharray="7 5">
          <path d="M42 112H490M190 112V345M310 69V335M403 112V335M485 335V268L560 188M670 290V372M403 69V112M820 190 815 270 870 282 950 284M858 150V195" />
          <path d="M380 340V372 420H470M380 372H468M468 340V420L480 440H530M380 420 300 410V380L255 375 240 345M300 410V430H245M140 410H210 240M196 430V470L272 540M245 430V512H310M280 470V430M310 440V512H400V475M320 512V610M272 540V610M380 455H470M400 475H490M400 512H500M372 512V600M395 540H410M460 535H600M500 500V560L545 565M545 575V632M585 540V630M490 440V500M530 340 520 420M600 450V520M640 470V510L600 530M580 560H700M650 500 620 520" strokeWidth="1.200" />
        </g>
        <g fill="none" stroke="#a2a09d" strokeWidth="4">
          <path d="M145 340H485L500 344 535 352 560 370 600 372 630 396M700 428 760 385 780 388 786 368 806 370 812 400 818 425M238 598 290 612 330 610 360 618 378 640 400 640 420 668 438 684 462 688M12 122 35 150 45 175 68 198 70 222 60 230 26 230M535 800 550 795 548 818 560 815M500 820 520 808M590 816 560 846M605 862 620 868M700 905 704 915M768 868 750 900 760 930 748 948M850 886 860 948" strokeWidth="3.500" />
        </g>
        <text x="440" y="500" fontSize="28" fontWeight="700" fill="#222" textAnchor="middle">UNITED STATES</text>
        {bubbles.map((g) =>
          g.d.map(([x, y, r]) => (
            <circle key={`${x}-${y}-${r}`} cx={x} cy={y} r={r} fill={g.c} fillOpacity=".6" stroke={g.s} strokeOpacity=".9" strokeWidth="2.500" />
          )),
        )}
        <g fontWeight="700" fill="#2b2b2b" stroke="#f4f3ef" strokeWidth="4" paintOrder="stroke" textAnchor="middle">
          <text x="401" y="176" fontSize="29">CANADA</text>
          <text x="407" y="742" fontSize="22">MEXICO</text>
          <text x="690" y="750" fontSize="19">CUBA</text>
          <text x="744" y="780" fontSize="20">HAITI</text>
          <text x="820" y="784" fontSize="19">PR<tspan x="820" dy="19">(US)</tspan></text>
          <text x="538" y="831" fontSize="21">GUATEMALA</text>
          <text x="609" y="860" fontSize="21">NICARAGUA</text>
          <text x="822" y="908" fontSize="22">VENEZUELA</text>
          <text x="908" y="945" fontSize="19">GUYANA</text>
        </g>
        <g fill="#5577bd" fontSize="22" textAnchor="middle">
          <text x="604" y="137" fontSize="25">Hudson Bay</text>
          <text x="543" y="694" fontSize="23">Gulf of<tspan x="543" dy="25">Mexico</tspan></text>
          <text x="778" y="840" fontSize="23">Caribbean Sea</text>
          <text x="961" y="185" textAnchor="end">Labrad</text>
          <text x="961" y="666" textAnchor="end">Sargasso Sea</text>
        </g>
        <path d="M22 906h10v10H22z" fill="#f25022" />
        <path d="M34 906h10v10H34z" fill="#7fba00" />
        <path d="M22 918h10v10H22z" fill="#00a4ef" />
        <path d="M34 918h10v10H34z" fill="#ffb900" />
        <text x="48" y="924" fontSize="16" fill="#667189">Microsoft Bing</text>
        <text x="453" y="932" fontSize="17" fill="#4d5566" stroke="#fff" strokeOpacity=".5" strokeWidth="3" paintOrder="stroke">© 2024 TomTom, © 2024 Microsoft Corporation</text>
        <text x="862" y="929" fontSize="15" fill="#7a83c9">Terms</text>
      </svg>
      <div className="absolute top-[5px] right-[23px] flex flex-col gap-[15px]">
        {["Zoom in", "Zoom out"].map((n) => (
          <button key={n} aria-label={n} className="flex size-6 items-center justify-center rounded-full border border-[#252423] bg-white">
            <Icon size={12}><path d={n === "Zoom in" ? "M0 6h12M6 0v12" : "M0 6h12"} stroke="#252423" strokeWidth="1.200" /></Icon>
          </button>
        ))}
      </div>
    </div>
  );
}

function Report() {
  return (
    <article className="mx-auto w-full max-w-[892px] border-x-2 border-b-2 border-dotted border-[#444]">
      <h1 className="flex h-[46px] items-center justify-center border-[3px] border-black bg-[#f4c4ae] pl-2 text-[27px] leading-8 font-bold text-black">
        CUSTOMER SEGMENTATION ANALYSIS
      </h1>
      <div className="grid grid-cols-[323fr_283fr_276fr] gap-0.5 bg-[#4c3a34] px-px pt-0.5 pb-px">
        <div className="flex flex-col gap-0.5">
          <div className="grid h-[109px] grid-cols-[153fr_168fr] gap-0.5">
            <Card title="Customer Count" value="793" label="Count of Customers" dark />
            <Card title="Quantity Sold" value="38K" label="Sum of Quantity" />
          </div>
          <Panel title="Sum of Sales by State and Region" className="flex-1">
            <div className="flex h-[22px] items-center gap-1.5 pt-0.5 pl-[3px] text-[10px] text-[#3b3a39]">
              <span className="text-[11px] font-semibold text-black">Region</span>
              {[["Central", "bg-[#E66C37]"], ["East", "bg-[#12239E]"], ["South", "bg-[#6B007B]"], ["West", "bg-[#118DFF]"]].map(([n, c]) => (
                <span key={n} className="flex items-center gap-0.5">
                  <i className={`size-[7px] rounded-full ${c}`} />
                  {n}
                </span>
              ))}
            </div>
            <MapView />
          </Panel>
        </div>
        <div className="flex flex-col gap-0.5">
          <Panel title="Sales by Region"><PieChart /></Panel>
          <Panel title="Total Profit by Segment" className="flex-1">
            <BarChart
              name="Total Profit by Segment" vw={283} bw={48.500} base={162} tickX={45} from={51} to={282}
              ticks={[["100K", 51], ["50K", 106], ["0K", 162]]}
              bars={[
                { x: 76.500, y: 13, label: ["Consumer"], cx: 102 },
                { x: 139.500, y: 59.500, label: ["Corporate"], cx: 165 },
                { x: 203, y: 95, label: ["Home", "Office"], cx: 229 },
              ]}
              labelY={181} axis="Segment" axisX={165} axisY={208} yTitleX={12} yTitleY={84}
            />
          </Panel>
        </div>
        <div className="flex flex-col gap-0.5">
          <Panel title="Sales by Segment"><DonutChart /></Panel>
          <Panel title="Total Profit by Region" className="flex-1">
            <BarChart
              name="Total Profit by Region" vw={276} bw={38} base={180} tickX={43} from={50} to={275}
              ticks={[["100K", 36], ["50K", 108], ["0K", 180]]}
              bars={[
                { x: 68, y: 23, label: ["West"], cx: 88 },
                { x: 117, y: 47, label: ["East"], cx: 137 },
                { x: 166, y: 112, label: ["South"], cx: 186 },
                { x: 215, y: 122, label: ["Central"], cx: 235 },
              ]}
              labelY={193} axis="Region" axisX={161} axisY={207} yTitleX={12} yTitleY={93}
            />
          </Panel>
        </div>
      </div>
    </article>
  );
}

/* ---------- page tabs ---------- */

function PageTabs() {
  return (
    <div className="flex h-[35px] shrink-0 bg-[#f3f2f1]">
      <button aria-label="Desktop layout" className="ml-2.5 flex w-6 flex-col items-center pt-1.5">
        <svg width="20" height="16" viewBox="0 0 20 16" fill="none" aria-hidden="true">
          <path d="M1 1h18v11H1zM10 12v3M6 15h8" stroke="#605e5c" strokeWidth="1.400" />
        </svg>
        <span className="mt-[5px] h-[3px] w-6 rounded bg-[#117865]" />
      </button>
      <button aria-label="Mobile layout" className="ml-[25px] flex pt-[5px]">
        <svg width="14" height="21" viewBox="0 0 14 21" fill="none" aria-hidden="true">
          <rect x="1" y="1" width="12" height="19" rx="1" stroke="#605e5c" strokeWidth="1.300" />
          <path d="M6 17h2" stroke="#605e5c" strokeWidth="1.500" />
        </svg>
      </button>
      <button aria-label="Previous page" className="ml-5 pb-px">
        <svg width="5" height="8" viewBox="0 0 5 8" aria-hidden="true"><path d="M5 0v8L0 4z" fill="#c8c6c4" /></svg>
      </button>
      <button aria-label="Next page" className="mr-1.5 ml-[18px] pb-px">
        <svg width="5" height="8" viewBox="0 0 5 8" aria-hidden="true"><path d="M0 0v8l5-4z" fill="#c8c6c4" /></svg>
      </button>
      <button className="w-[73px] border-b-4 border-l border-b-[#117865] border-l-[#a19f9d] bg-white pt-1 text-[12px] text-[#252423]">Page1</button>
      <button aria-label="New page" className="flex w-[39px] items-center justify-center bg-[#117865]">
        <Icon size={12}><path d="M6 .5v11M.5 6h11" stroke="#fff" strokeWidth="3" /></Icon>
      </button>
    </div>
  );
}

/* ---------- right panes ---------- */

function Chevrons({ right }: { right?: boolean }) {
  return (
    <svg width="13" height="13" viewBox="0 0 13 13" fill="none" className={right ? "rotate-180" : ""} aria-hidden="true">
      <path d="M6.500.5.700 6.500l5.800 6M12.300.5l-5.800 6 5.800 6" stroke="#3b3a39" strokeWidth="1.200" />
    </svg>
  );
}

function DataPane() {
  return (
    <aside className="flex w-[181px] shrink-0 flex-col border-l border-[#d9d7d5] bg-[#f3f2f1] pr-1 pl-1">
      <div className="flex h-[45px] items-center justify-between pr-1 pb-1.5 pl-1">
        <h2 className="text-[15px] font-semibold text-[#252423]">Data</h2>
        <button aria-label="Collapse Data pane"><Chevrons right /></button>
      </div>
      <label className="flex h-6 items-center gap-2 rounded border border-[#d1cfcd] border-b-[#605e5c] bg-white pl-3">
        <svg width="15" height="14" viewBox="0 0 15 14" fill="none" aria-hidden="true">
          <circle cx="6" cy="6" r="5.200" stroke="#616161" />
          <path d="m10 10 3.600 3.600" stroke="#616161" />
        </svg>
        <input aria-label="Search fields" placeholder="Search" className="w-full min-w-0 bg-transparent text-[12px] outline-none placeholder:text-[#707070]" />
      </label>
      <ul className="pt-2.5">
        {["Dimdate", "Orders", "People", "Returns"].map((n, i) => (
          <li key={n} className="flex h-6 items-center text-[12px] text-[#3b3a39]">
            <button className="flex items-center pl-2.5">
              <svg width="8" height="13" viewBox="0 0 8 13" fill="none" className="mr-[7px]" aria-hidden="true">
                <path d="m1 .8 5.800 5.700L1 12.200" stroke="#7a7876" />
              </svg>
              <svg width="14" height="14" viewBox="0 0 14 14" fill="none" className="mr-1" aria-hidden="true">
                <rect x=".8" y="1.200" width="11" height="11" rx="1.800" stroke="#252423" strokeWidth="1.200" />
                <path d="M.8 4.800h11M.8 8.600h11M4.400 1.200v11M8.200 1.200v11" stroke="#252423" />
                {i === 0 && (
                  <g>
                    <path d="M6.500 4.500H14V14H6.500z" fill="#f3f2f1" />
                    <rect x="7.700" y="5.200" width="5.600" height="8" rx=".8" stroke="#252423" strokeWidth="1.200" />
                    <path d="M8 7.800h5M8 10.400h5M10.500 7.800v5" stroke="#252423" />
                  </g>
                )}
              </svg>
              {n}
            </button>
            {i === 0 && (
              <button aria-label="More options" className="mr-[3px] ml-auto">
                <svg width="12" height="2" viewBox="0 0 12 2" aria-hidden="true"><path d="M0 0h2v1.500H0zM5 0h2v1.500H5zM10 0h2v1.500h-2z" fill="#7a7876" /></svg>
              </button>
            )}
          </li>
        ))}
      </ul>
    </aside>
  );
}

/* ---------- status bar ---------- */

function StatusBar() {
  return (
    <footer className="flex h-6 shrink-0 items-center justify-between border-t border-[#e1dfdd] bg-[#f3f2f1] pr-[18px] pl-1 text-[11px] text-[#484644]">
      <span className="pt-0.5">Page 1 of 1</span>
      <div className="flex items-center">
        <button aria-label="Zoom out" className="mr-1"><Icon size={5}><path d="M0 2.500h5" stroke="#484644" strokeWidth="1.800" /></Icon></button>
        <div className="relative flex items-center">
          <input
            type="range" aria-label="Zoom level" min={10} max={400} defaultValue={134}
            className="h-[11px] w-[100px] appearance-none bg-transparent [&::-webkit-slider-runnable-track]:h-px [&::-webkit-slider-runnable-track]:bg-[#605e5c] [&::-webkit-slider-thumb]:-mt-[5px] [&::-webkit-slider-thumb]:h-[11px] [&::-webkit-slider-thumb]:w-1 [&::-webkit-slider-thumb]:appearance-none [&::-webkit-slider-thumb]:bg-[#605e5c]"
          />
          <span className="absolute top-[3px] left-1/2 h-[5px] w-px bg-[#605e5c]" />
        </div>
        <button aria-label="Zoom in" className="ml-1.5"><Icon size={7}><path d="M0 3.500h7M3.500 0v7" stroke="#484644" strokeWidth="1.200" /></Icon></button>
        <span className="ml-3.5">69%</span>
        <button aria-label="Fit to page" className="ml-5">
          <svg width="16" height="12" viewBox="0 0 16 12" fill="none" aria-hidden="true">
            <path d="M.5.500h15v11H.5zM3 5V3h2.500M13 5V3h-2.500M3 7v2h2.500M13 7v2h-2.500" stroke="#484644" />
          </svg>
        </button>
      </div>
    </footer>
  );
}

/* ---------- taskbar ---------- */

function Fireplace() {
  return (
    <svg width="52" height="39" viewBox="0 0 52 38" aria-hidden="true">
      <defs>
        <linearGradient id="wood" x1="0" x2="0" y1="0" y2="1"><stop stopColor="#c5761f" /><stop offset="1" stopColor="#6d3406" /></linearGradient>
        <radialGradient id="fire" cx=".5" cy=".8" r=".7"><stop stopColor="#fff1a0" /><stop offset=".5" stopColor="#f79a24" /><stop offset="1" stopColor="#a53808" /></radialGradient>
      </defs>
      <path d="M2 9c4-6 10-6 16-5l8 2 8-2c6-1 12-1 16 5l1 7-5 3-3-7H9l-3 7-5-3z" fill="#4b8a63" />
      <path d="M3 14l8-10M8 16 14 4M49 14 41 4M44 16 38 4M1 10l8-2M51 10l-8-2" stroke="#8cc0a0" strokeWidth="1.300" />
      <path d="M24 2c0-2 2-2 4 0v8h-5z" fill="#dd4a36" />
      <path d="M21 8l5 3 5-3-1-3-4 2-4-2z" fill="#e8654a" />
      <path d="M5 17l4 3-1 9-3-4-2 3zM47 17l-4 3 1 9 3-4 2 3z" fill="#d8453b" />
      <path d="M5 10h42v3H5z" fill="#e0952f" />
      <path d="M8 13h36v25H8z" fill="url(#wood)" />
      <path d="M9 14h34v2H9z" fill="#7c3f0a" />
      <path d="M14 18h24v20H14z" fill="#3a1703" />
      <path d="M16 36c-1-6 2-8 3-11 1 2 2 2 2 2 1-4 3-5 4-8 2 3 4 5 4 8l2-2c1 4 5 6 4 11z" fill="url(#fire)" />
      <circle cx="19" cy="33.500" r="3.500" fill="#b58a4a" />
      <path d="M6 35h9v3H6zM37 35h9v3h-9z" fill="#4d2203" />
    </svg>
  );
}

const apps: { name: string; run?: boolean; active?: boolean; icon: React.ReactNode }[] = [
  { name: "Copilot", icon: <CopilotLogo id="tc" size={26} /> },
  {
    name: "Microsoft Edge",
    icon: (
      <Icon size={26}>
        <defs>
          <linearGradient id="eg1" x1="2" y1="6" x2="24" y2="10" gradientUnits="userSpaceOnUse"><stop stopColor="#2a9be0" /><stop offset=".6" stopColor="#35c1d0" /><stop offset="1" stopColor="#6bdc70" /></linearGradient>
        </defs>
        <circle cx="13" cy="13" r="12" fill="#1b6fc4" />
        <path d="M1.200 12C2 5.500 7 1 13 1c7 0 12 5 12 10.500 0 4-3 6-6.500 6-2.500 0-4-1-3.500-2 1.500-2 .5-5.500-3-6C8 9 5 10 3 13z" fill="url(#eg1)" />
        <path d="M12 9.500c-6 0-8 8-2 13 2 1.500 4 2.500 6 2 3-.5 6-3 7.500-6-3 2-7 1.500-9.500-.5-2.500-2-2.500-5 0-7z" fill="#0f4f9c" />
      </Icon>
    ),
  },
  {
    name: "File Explorer",
    icon: (
      <Icon size={26}>
        <path d="M2 4h8l2 2h12v17H2z" fill="#e3a21a" />
        <path d="M2 8h22v14H2z" fill="#fcd667" />
        <path d="M6 22v-8h14v8h-4v-4h-6v4z" fill="#3b96dd" />
      </Icon>
    ),
  },
  {
    name: "Microsoft Store",
    icon: (
      <Icon size={26}>
        <path d="M8 7V2h10v5" stroke="#27b0ea" strokeWidth="2" />
        <rect x="1.500" y="6" width="23" height="19" rx="2.500" fill="#f1f1f1" />
        <path d="M8.500 11h4v4h-4z" fill="#f25022" /><path d="M13.500 11h4v4h-4z" fill="#7fba00" />
        <path d="M8.500 16h4v4h-4z" fill="#00a4ef" /><path d="M13.500 16h4v4h-4z" fill="#ffb900" />
      </Icon>
    ),
  },
  {
    name: "Google Chrome", run: true,
    icon: (
      <Icon size={26}>
        <circle cx="13" cy="13" r="12" fill="#ffcd40" />
        <path d="M13 13 2.600 7A12 12 0 0 1 23.400 7z" fill="#e33b2e" />
        <path d="M13 13 2.600 7A12 12 0 0 0 13 25l5-9z" fill="#1f9d55" />
        <path d="M13 7h10.400A12 12 0 0 1 13 25l5.200-9z" fill="#ffcd40" />
        <circle cx="13" cy="13" r="6" fill="#fff" /><circle cx="13" cy="13" r="4.700" fill="#2b7de9" />
      </Icon>
    ),
  },
  {
    name: "Outlook",
    icon: (
      <Icon size={26}>
        <path d="M5 8 14 2l11 7v14H6z" fill="#1a73c8" />
        <path d="M14 2 5 8l9 8 11-7z" fill="#2a9fe8" />
        <path d="m25 9-14 9v6h12c1 0 2-1 2-2z" fill="#4fd2f6" />
        <path d="m14 11 8-6 3 4-9 6z" fill="#154f9e" />
        <path d="M1 6.500h13v13H1z" fill="#1266bf" />
        <ellipse cx="7.500" cy="13" rx="3" ry="3.500" stroke="#fff" strokeWidth="1.800" />
      </Icon>
    ),
  },
  {
    name: "Webex", run: true,
    icon: (
      <Icon size={26}>
        <defs><linearGradient id="wx" x1="3" y1="8" x2="23" y2="16" gradientUnits="userSpaceOnUse"><stop stopColor="#35d0f2" /><stop offset=".5" stopColor="#2a62f0" /><stop offset="1" stopColor="#3ddc84" /></linearGradient></defs>
        <rect x="1" y="1" width="24" height="24" rx="5" fill="#0b0b0c" />
        <path d="M4 8c0 6 1 10 4 10 4 0 4-11 10-12 4-.5 5 3 4 6-1 4-2 6-4 6-4 0-4-8-7-10-1.500-1-3-1-3.500 1" stroke="url(#wx)" strokeWidth="3" strokeLinecap="round" />
      </Icon>
    ),
  },
  {
    name: "Power BI Desktop", run: true, active: true,
    icon: (
      <Icon size={26}>
        <path d="M13 1h9v24h-9z" fill="#d9920f" /><path d="M8 7h9v18H8z" fill="#efb91c" /><path d="M3 13h9v12H3z" fill="#fbdc62" />
      </Icon>
    ),
  },
];

function Taskbar() {
  return (
    <div className="flex h-[41px] shrink-0 items-stretch border-t border-black bg-[linear-gradient(90deg,#2a2624_0%,#2c2826_25%,#3b3b3e_36%,#3a3a3c_45%,#2d2725_56%,#26211f_65%,#40332d_80%,#3a2b27_90%,#42362f_100%)] text-white">
      <button aria-label="Start" className="flex w-12 items-center justify-center">
        <Icon size={16}><path d="M0 2.200 6.600 1.300v6.300H0zM7.500 1.200 16 0v7.600H7.500zM0 8.500h6.600v6.300L0 13.900zM7.500 8.500H16V16l-8.500-1.200z" fill="#fff" /></Icon>
      </button>
      <label className="flex w-72 items-center border border-[#a3a09e] bg-[#f2f2f2] pl-[11px]">
        <svg width="17" height="17" viewBox="0 0 17 17" fill="none" aria-hidden="true">
          <circle cx="10.500" cy="6.300" r="5.500" stroke="#222" strokeWidth="1.300" />
          <path d="m6.500 10.200-6 6" stroke="#222" strokeWidth="1.400" />
        </svg>
        <input aria-label="Type here to search" placeholder="Type here to search" className="ml-[11px] w-[181px] bg-transparent text-[14px] outline-none placeholder:text-[#3b3a39]" />
        <Fireplace />
      </label>
      <button aria-label="Task view" className="flex w-[50px] items-center justify-center">
        <Icon size={18}><path d="M1.500 5.500h11v7h-11zM1.500 3V1M12.500 3V1M1.500 2.500h11M1.500 15.500h11M1.500 15v2M12.500 15v2M16 1v3M16 9v8" stroke="#fff" strokeWidth="1.200" /><path d="M14.500 5h3v3h-3z" fill="#fff" /></Icon>
      </button>
      {apps.map((a) => (
        <button key={a.name} aria-label={a.name} className={`flex w-[49px] flex-col items-center justify-between pt-[7px] ${a.active ? "bg-[#5b5755]" : ""}`}>
          {a.icon}
          <span className={`h-0.5 ${a.active ? "w-full" : "w-10"} ${a.run ? "bg-[#76b9ed]" : ""}`} />
        </button>
      ))}
      <div className="ml-auto flex items-center">
        <button className="mr-[26px] flex items-center gap-2.5 text-[13px] whitespace-nowrap">
          <svg width="22" height="18" viewBox="0 0 22 18" aria-hidden="true">
            <path d="M4 3h18v13l-3 2H4z" fill="#1258a8" />
            <rect width="19" height="16" rx="2" fill="#23a3d9" />
            <path d="M4 3v7M9.500 7v3M15 5v5" stroke="#fff" strokeWidth="3" strokeLinecap="round" />
            <path d="M3 14h13" stroke="#7fe3ff" strokeWidth="1.500" />
          </svg>
          Trump’s Tariffs, Bangl...
        </button>
        <button aria-label="Show hidden icons" className="mr-2.5"><Icon size={12}><path d="m.5 8.500 5.500-5.500 5.500 5.500" stroke="#fff" strokeWidth="1.200" /></Icon></button>
        <button aria-label="Battery" className="mr-2">
          <svg width="16" height="10" viewBox="0 0 16 10" fill="none" aria-hidden="true"><path d="M1 1h12.500v8H1zM15 3.500v3" stroke="#fff" strokeWidth="1.300" /><path d="M3 3h6v4H3z" fill="#fff" /></svg>
        </button>
        <button aria-label="OneDrive" className="mr-2.5">
          <svg width="16" height="12" viewBox="0 0 16 12" aria-hidden="true"><path d="M4 11a3.300 3.300 0 0 1 0-6.500A4.500 4.500 0 0 1 12 4.500 3.300 3.300 0 0 1 12.500 11z" fill="#fff" /><path d="m1 6 4-1.500L14 10" stroke="#ccc" fill="none" /></svg>
        </button>
        <button aria-label="Network" className="mr-2">
          <svg width="14" height="13" viewBox="0 0 14 13" fill="none" aria-hidden="true"><path d="M1 12C1 6 6 1.200 13 1.200M4 12c0-4.500 4-7.800 9-7.800M7 12c0-2.800 2.500-4.800 6-4.800" stroke="#cfcac7" /><path d="M9.500 12c0-1.500 1.500-2 3.500-2v2z" fill="#fff" /></svg>
        </button>
        <button aria-label="Volume" className="mr-2">
          <svg width="17" height="13" viewBox="0 0 17 13" fill="none" aria-hidden="true"><path d="M.7 4.500H3L6.500 1v11L3 8.500H.7z" stroke="#fff" strokeWidth="1.200" /><path d="M8.500 4.500c1 1 1 3 0 4M11 3c2 2 2 5 0 7" stroke="#fff" /><path d="M13.500 1.500c2.500 3 2.500 7 0 10" stroke="#9a9390" /></svg>
        </button>
        <button className="mr-3 text-center text-[11px] leading-[17px]">ENG<br />IN</button>
        <button className="mr-[18px] text-center text-[11px] leading-[17px]">7:08 PM<br />12/5/2024</button>
        <button aria-label="Notifications, 1 new" className="mr-[11px]">
          <svg width="26" height="26" viewBox="0 0 26 26" aria-hidden="true">
            <path d="M1 3h16v13H9l-3 3v-3H1z" fill="#fff" />
            <path d="M3.500 6.500h11M3.500 9.500h11M3.500 12.500h7" stroke="#3a2f2a" />
            <circle cx="16.500" cy="17" r="7.500" fill="#453b37" stroke="#8b8480" />
            <text x="16.500" y="21" textAnchor="middle" fontSize="11" fill="#fff">1</text>
          </svg>
        </button>
        <span className="h-full w-[5px] border-l border-[#8d8783]" />
      </div>
    </div>
  );
}

/* ---------- app ---------- */

export default function App() {
  return (
    <div className="relative flex min-h-screen flex-col bg-white font-['Open_Sans','Noto_Sans',sans-serif]">
      <TitleBar />
      <Ribbon />
      <main className="flex flex-1">
        <SideNav />
        <div className="flex min-w-0 flex-1 flex-col">
          <div className="flex flex-1">
            <div className="min-w-0 flex-1">
              <Report />
            </div>
            <aside className="flex w-[33px] shrink-0 flex-col items-center border-l border-[#a6a4a2] bg-white pt-[13px]">
              <button aria-label="Expand Filters pane"><Chevrons /></button>
              <svg width="13" height="12" viewBox="0 0 13 12" fill="none" className="mt-[15px]" aria-hidden="true">
                <path d="M12.300 1v10L7 7.200H1V4.800h6z" stroke="#252423" strokeWidth="1.200" strokeLinejoin="round" />
              </svg>
              <h2 className="mt-2 text-[15px] leading-4 font-semibold text-[#252423] [writing-mode:vertical-rl]">Filters</h2>
            </aside>
          </div>
          <PageTabs />
        </div>
        <aside className="flex w-[35px] shrink-0 flex-col items-center border-l border-[#d9d7d5] bg-[#f3f2f1] pt-[13px]">
          <button aria-label="Expand Visualizations pane"><Chevrons /></button>
          <h2 className="mt-3.5 text-[15px] leading-4 font-semibold text-[#252423] [writing-mode:vertical-rl]">Visualizations</h2>
        </aside>
        <DataPane />
      </main>
      <StatusBar />
      <Taskbar />
      <div className="pointer-events-none absolute right-16 bottom-[73px] whitespace-nowrap text-[#b5b3b1]">
        <p className="text-[19px] leading-6">Activate Windows</p>
        <p className="text-[14px] leading-5">Go to Settings to activate Windows.</p>
      </div>
    </div>
  );
}
